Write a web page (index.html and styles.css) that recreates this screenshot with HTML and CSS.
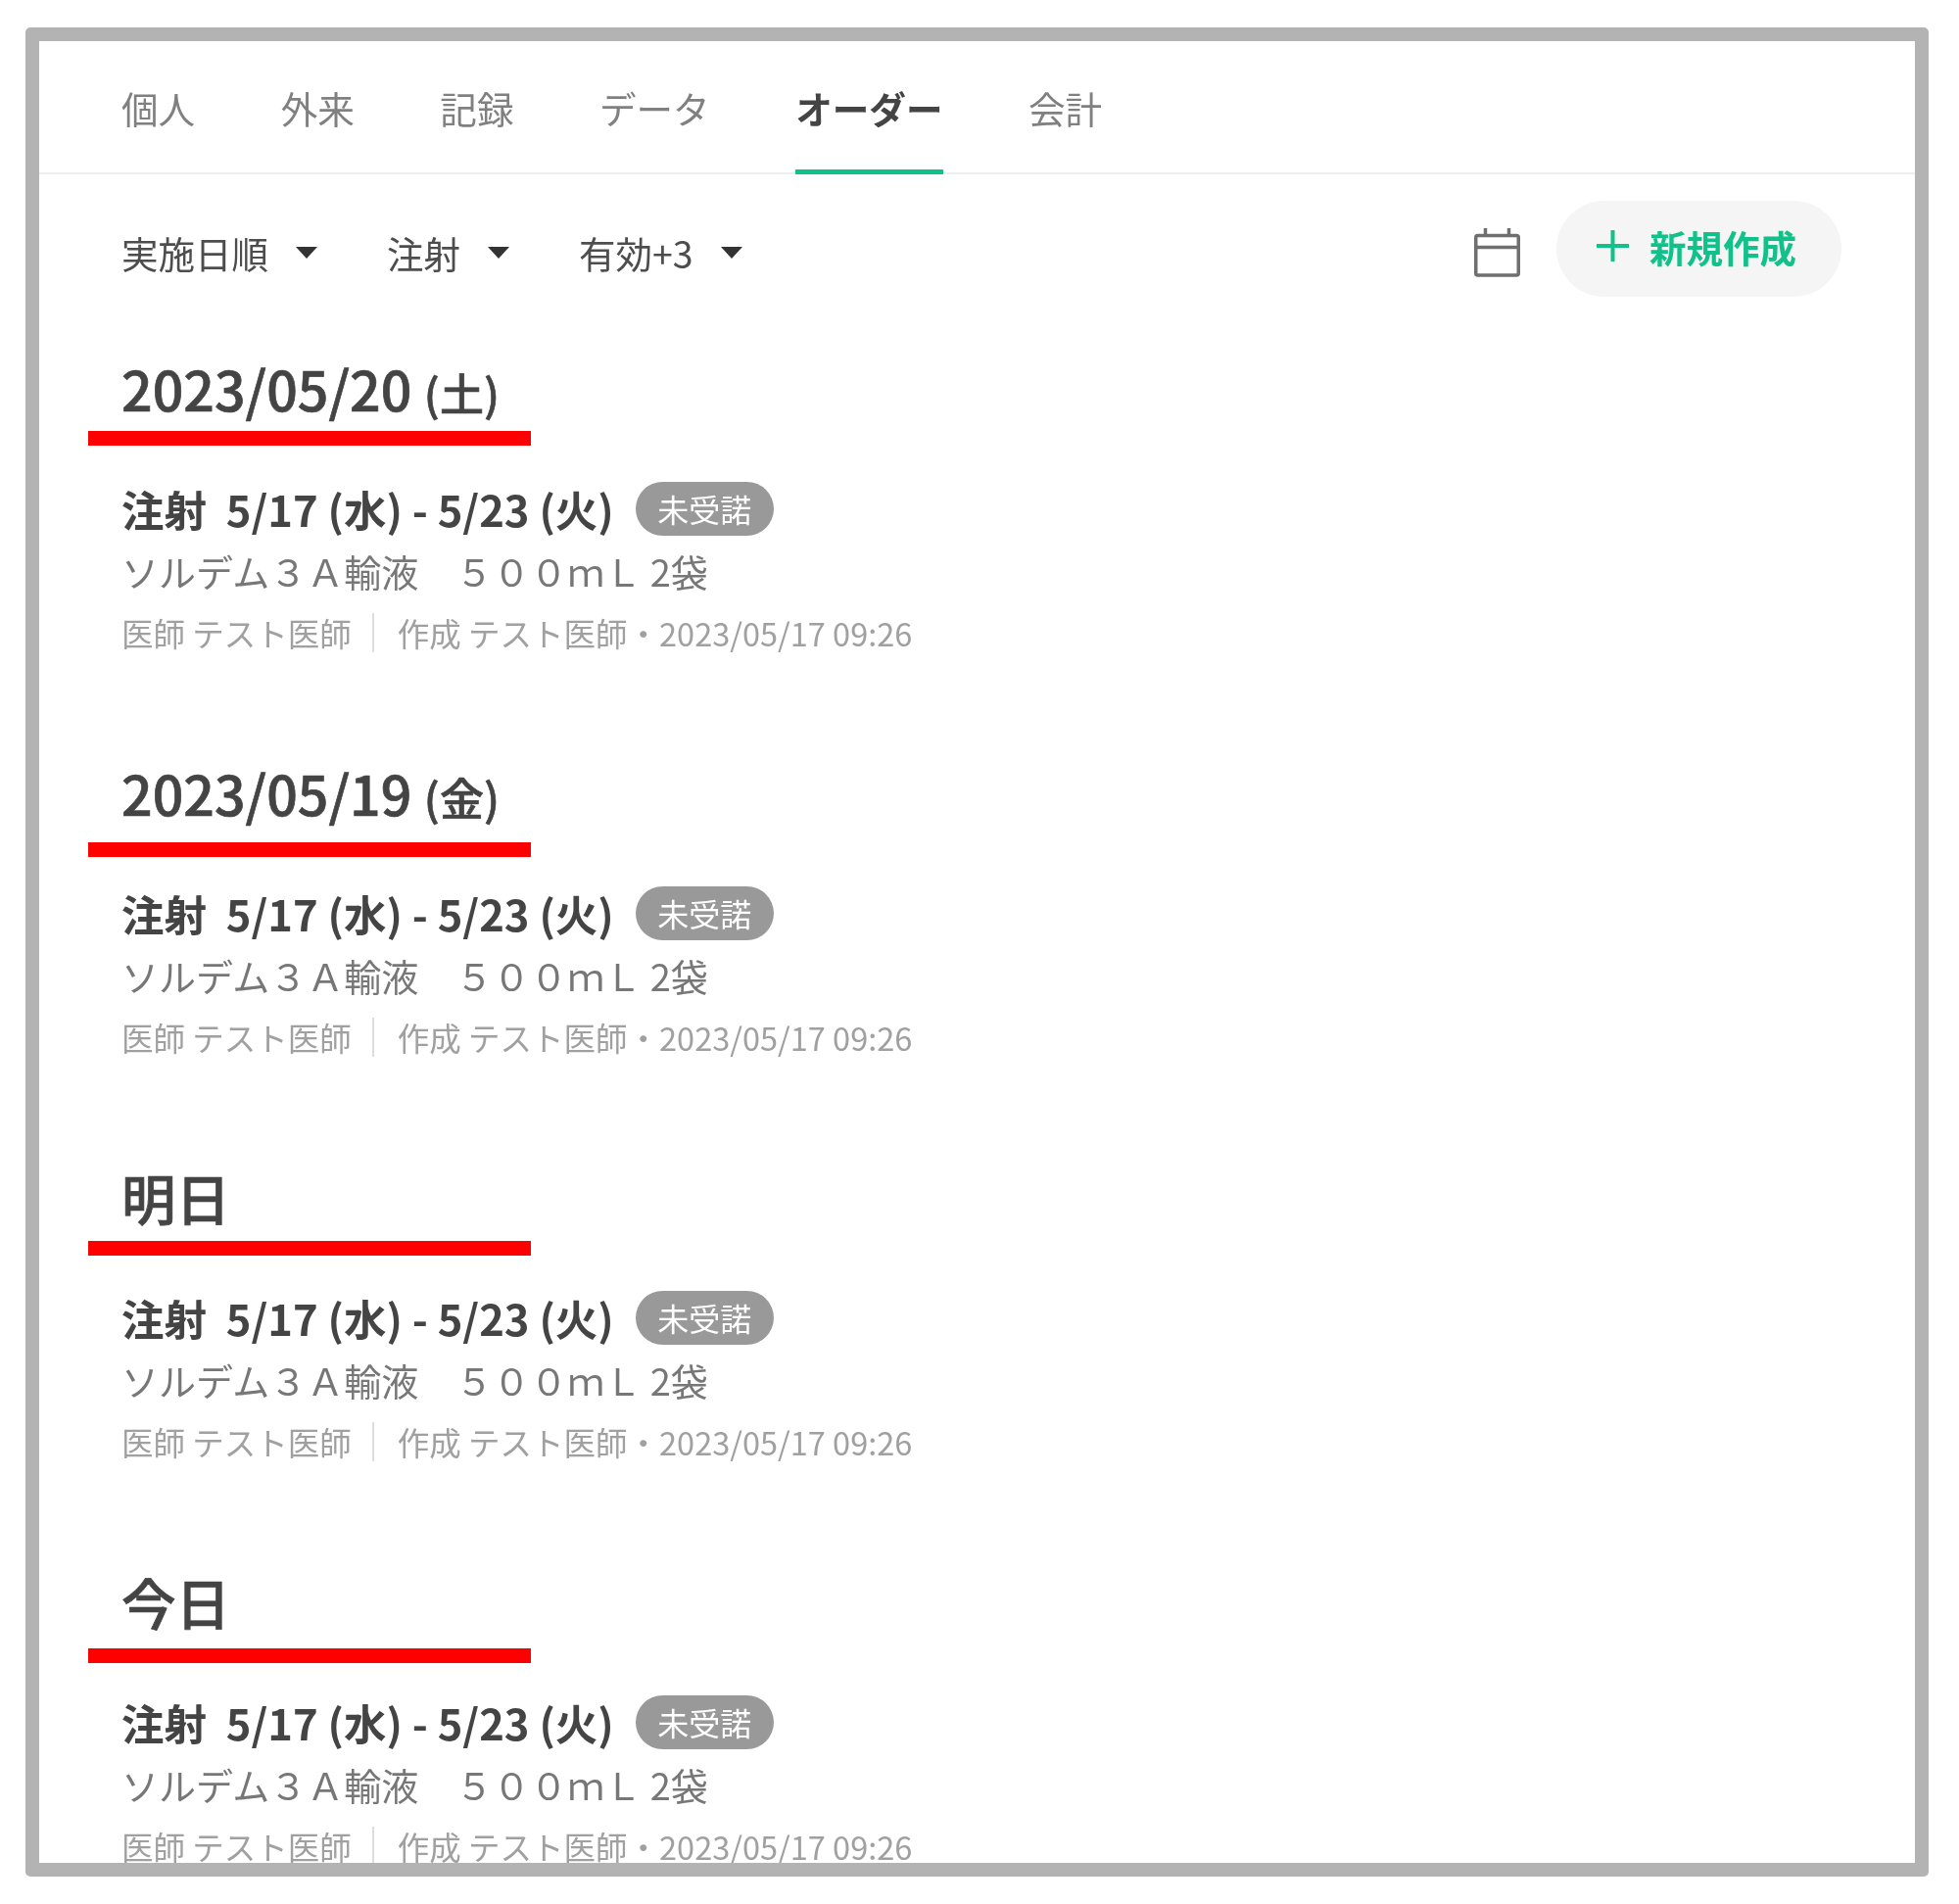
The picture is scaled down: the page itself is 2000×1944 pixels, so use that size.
FILE: index.html
```html
<!DOCTYPE html>
<html lang="ja">
<head>
<meta charset="utf-8">
<title>オーダー</title>
<link rel="stylesheet" href="styles.css">
</head>
<body>
<div class="frame">
  <nav class="tabs">
    <span class="tab">個人</span>
    <span class="tab">外来</span>
    <span class="tab">記録</span>
    <span class="tab">データ</span>
    <span class="tab active">オーダー</span>
    <span class="tab">会計</span>
  </nav>
  <div class="toolbar">
    <div class="filters">
      <span class="filter">実施日順<i class="caret"></i></span>
      <span class="filter">注射<i class="caret"></i></span>
      <span class="filter">有効+3<i class="caret"></i></span>
    </div>
    <div class="actions">
      <svg class="calendar" viewBox="0 0 47 50" width="47" height="50" fill="none" stroke="#6f6f6f" stroke-width="3.5">
        <rect x="1.750" y="7.500" width="43.500" height="40.500" rx="2"/>
        <path d="M1.500 19.500h44M11.500 0v9M35.500 0v9"/>
      </svg>
      <button class="create">
        <svg class="plus" viewBox="0 0 33 32" width="33" height="32" stroke="#10c28a" stroke-width="4" fill="none"><path d="M0 16h33M16.500 0v32"/></svg>
        <span>新規作成</span>
      </button>
    </div>
  </div>

  <section class="day">
    <h2 class="date">2023/05/20 <small>(土)</small></h2>
    <i class="mark mark-a"></i>
    <div class="title"><strong>注射&nbsp;&nbsp;5/17 (水) - 5/23 (火)</strong><span class="badge">未受諾</span></div>
    <p class="drug">ソルデム３Ａ輸液　５００ｍＬ 2袋</p>
    <p class="meta"><span class="doc">医師 テスト医師</span><span>作成 テスト医師・2023/05/17 09:26</span></p>
  </section>
  <section class="day">
    <h2 class="date">2023/05/19 <small>(金)</small></h2>
    <i class="mark mark-b"></i>
    <div class="title"><strong>注射&nbsp;&nbsp;5/17 (水) - 5/23 (火)</strong><span class="badge">未受諾</span></div>
    <p class="drug">ソルデム３Ａ輸液　５００ｍＬ 2袋</p>
    <p class="meta"><span class="doc">医師 テスト医師</span><span>作成 テスト医師・2023/05/17 09:26</span></p>
  </section>
  <section class="day">
    <h2 class="date">明日</h2>
    <i class="mark mark-c"></i>
    <div class="title"><strong>注射&nbsp;&nbsp;5/17 (水) - 5/23 (火)</strong><span class="badge">未受諾</span></div>
    <p class="drug">ソルデム３Ａ輸液　５００ｍＬ 2袋</p>
    <p class="meta"><span class="doc">医師 テスト医師</span><span>作成 テスト医師・2023/05/17 09:26</span></p>
  </section>
  <section class="day">
    <h2 class="date">今日</h2>
    <i class="mark mark-d"></i>
    <div class="title"><strong>注射&nbsp;&nbsp;5/17 (水) - 5/23 (火)</strong><span class="badge">未受諾</span></div>
    <p class="drug">ソルデム３Ａ輸液　５００ｍＬ 2袋</p>
    <p class="meta"><span class="doc">医師 テスト医師</span><span>作成 テスト医師・2023/05/17 09:26</span></p>
  </section>
</div>
</body>
</html>
```
FILE: styles.css
```css
* { box-sizing: border-box; }
html, body { margin: 0; background: #fff; }
body {
  font-family: "Noto Sans CJK JP", "Noto Sans", sans-serif;
  color: #444;
  padding: 28px 31px 28px 26px;
}
.frame {
  height: 1888px;
  border: 14px solid #b3b3b3;
  border-radius: 5px;
  overflow: hidden;
  background: #fff;
  filter: blur(0.7px);
}
.tabs {
  display: flex;
  gap: 87.5px;
  height: 136px;
  padding: 0 84px;
  border-bottom: 2px solid #eee;
}
.tab {
  height: 136px;
  font-size: 37.6px;
  line-height: 136px;
  color: #808080;
}
.tab.active {
  color: #444;
  font-weight: 700;
  box-shadow: inset 0 -5px 0 #10c28a;
}
.toolbar {
  display: flex;
  justify-content: space-between;
  align-items: center;
  height: 101px;
  margin-top: 24px;
  padding: 0 75px 0 84px;
}
.filters {
  display: flex;
  gap: 71px;
  font-size: 37.5px;
  line-height: 50px;
  padding-top: 10px;
  color: #4d4d4d;
}
.filter { display: flex; align-items: center; }
.caret {
  width: 0;
  height: 0;
  margin-left: 28px;
  border: 11px solid transparent;
  border-top: 12px solid #333;
  border-bottom: 0;
}
.actions { display: flex; align-items: flex-end; gap: 37px; height: 101px; }
.calendar { display: block; margin-bottom: 20px; }
.create {
  display: flex;
  align-items: center;
  gap: 21px;
  height: 98px;
  width: 291px;
  padding: 0 0 4px 41px;
  border: 0;
  border-radius: 49px;
  background: #f5f5f5;
  color: #10c28a;
  font: 700 37.5px/50px "Noto Sans CJK JP", sans-serif;
}
.plus { margin-bottom: 2px; }
.day {
  position: relative;
  height: 413px;
  padding-left: 84px;
}
.toolbar + .day { margin-top: 53px; }
.date {
  margin: 0 0 56px;
  font-size: 55.5px;
  font-weight: 500;
  line-height: 80px;
  color: #444;
  -webkit-text-stroke: 0.7px #444;
}
.date small { font-size: 45px; font-weight: 500; line-height: 0; }
.mark {
  position: absolute;
  left: 50px;
  width: 452px;
  height: 15px;
  background: #f00;
}
.mark-a { top: 84px; }
.mark-b { top: 91px; }
.mark-c { top: 85px; }
.mark-d { top: 88px; }
.title { display: flex; align-items: center; height: 55px; gap: 22px; }
.title strong { font-size: 43.5px; font-weight: 700; line-height: 55px; color: #444; }
.badge {
  width: 141px;
  height: 55px;
  border-radius: 28px;
  background: #999;
  color: #fff;
  font-size: 32px;
  line-height: 55px;
  text-align: center;
}
.drug { margin: 11px 0 0; font-size: 38px; line-height: 50px; color: #777; }
.meta {
  display: flex;
  margin: 18px 0 0;
  font-size: 32.5px;
  line-height: 40px;
  color: #a0a0a0;
}
.doc { margin-right: 24px; padding-right: 21px; border-right: 2px solid #ddd; }
```
